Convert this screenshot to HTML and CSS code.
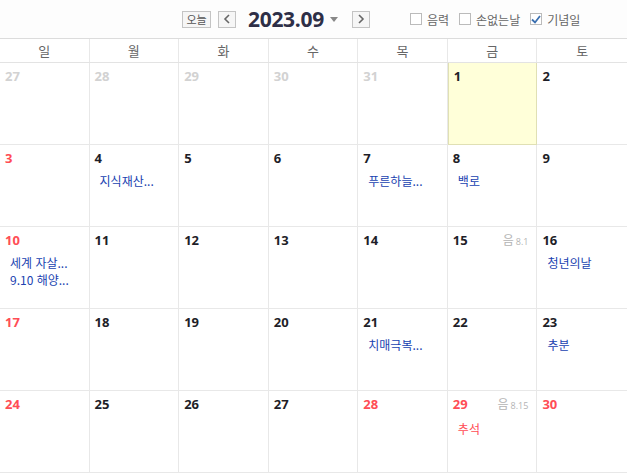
FILE: index.html
```html
<!DOCTYPE html>
<html lang="ko">
<head>
<meta charset="utf-8">
<link rel="stylesheet" href="styles.css">
</head>
<body>
<div class="top">
  <div class="nav">
    <button class="btn today-btn">오늘</button>
    <button class="btn arrow"><svg width="8" height="10" viewBox="0 0 8 10"><path d="M6 1 L2 5 L6 9" fill="none" stroke="#666" stroke-width="1.6"/></svg></button>
    <div class="title">2023.09</div>
    <svg class="caret" width="8" height="5" viewBox="0 0 8 5"><path d="M0 0 L8 0 L4 5 Z" fill="#888"/></svg>
    <button class="btn arrow"><svg width="8" height="10" viewBox="0 0 8 10"><path d="M2 1 L6 5 L2 9" fill="none" stroke="#666" stroke-width="1.6"/></svg></button>
  </div>
  <div class="opts">
    <label class="opt"><span class="box"></span>음력</label>
    <label class="opt"><span class="box"></span>손없는날</label>
    <label class="opt"><span class="box checked"><svg width="10" height="9" viewBox="0 0 10 9"><path d="M1 4.5 L4 7.5 L9 1" fill="none" stroke="#3a6fb0" stroke-width="1.8"/></svg></span>기념일</label>
  </div>
</div>
<div class="weekdays">
  <div class="wd">일</div><div class="wd">월</div><div class="wd">화</div><div class="wd">수</div><div class="wd">목</div><div class="wd">금</div><div class="wd">토</div>
</div>
<div class="grid">
  <div class="cell"><div class="num dim">27</div></div>
  <div class="cell"><div class="num dim">28</div></div>
  <div class="cell"><div class="num dim">29</div></div>
  <div class="cell"><div class="num dim">30</div></div>
  <div class="cell"><div class="num dim">31</div></div>
  <div class="cell today"><div class="num">1</div></div>
  <div class="cell"><div class="num">2</div></div>

  <div class="cell"><div class="num red">3</div></div>
  <div class="cell"><div class="num">4</div><div class="ev">지식재산...</div></div>
  <div class="cell"><div class="num">5</div></div>
  <div class="cell"><div class="num">6</div></div>
  <div class="cell"><div class="num">7</div><div class="ev">푸른하늘...</div></div>
  <div class="cell"><div class="num">8</div><div class="ev">백로</div></div>
  <div class="cell"><div class="num">9</div></div>

  <div class="cell"><div class="num red">10</div><div class="ev">세계 자살...</div><div class="ev">9.10 해양...</div></div>
  <div class="cell"><div class="num">11</div></div>
  <div class="cell"><div class="num">12</div></div>
  <div class="cell"><div class="num">13</div></div>
  <div class="cell"><div class="num">14</div></div>
  <div class="cell"><div class="num">15<span class="lunar">음<small>8.1</small></span></div></div>
  <div class="cell"><div class="num">16</div><div class="ev">청년의날</div></div>

  <div class="cell"><div class="num red">17</div></div>
  <div class="cell"><div class="num">18</div></div>
  <div class="cell"><div class="num">19</div></div>
  <div class="cell"><div class="num">20</div></div>
  <div class="cell"><div class="num">21</div><div class="ev">치매극복...</div></div>
  <div class="cell"><div class="num">22</div></div>
  <div class="cell"><div class="num">23</div><div class="ev">추분</div></div>

  <div class="cell"><div class="num red">24</div></div>
  <div class="cell"><div class="num">25</div></div>
  <div class="cell"><div class="num">26</div></div>
  <div class="cell"><div class="num">27</div></div>
  <div class="cell"><div class="num red">28</div></div>
  <div class="cell"><div class="num red">29<span class="lunar">음<small>8.15</small></span></div><div class="ev holiday">추석</div></div>
  <div class="cell"><div class="num red">30</div></div>
</div>
</body>
</html>
```
FILE: styles.css
```css
* { box-sizing: border-box; }
body {
  margin: 0;
  width: 627px;
  height: 473px;
  overflow: hidden;
  background: #fff;
  font-family: "Noto Sans CJK KR", "Noto Sans", sans-serif;
  color: #222;
}
.top {
  height: 39px;
  border-bottom: 1px solid #dcdcdc;
  background: #fdfdfd;
  position: relative;
  display: flex;
  align-items: center;
}
.nav {
  display: flex;
  align-items: center;
  margin-left: 182px;
}
.btn {
  height: 17px;
  border: 1px solid #c4c4c4;
  background: #f6f6f6;
  padding: 0;
  font-family: inherit;
  font-size: 11px;
  color: #555;
  display: flex;
  align-items: center;
  justify-content: center;
  line-height: 1;
}
.today-btn { width: 29px; margin-right: 7px; }
.arrow { width: 18px; }
.title {
  margin-left: 12px;
  font-family: "Open Sans", "Noto Sans", sans-serif;
  font-weight: 700;
  font-size: 21px;
  color: #2e2f47;
  letter-spacing: -0.3px;
  line-height: 24px;
}
.caret { margin-left: 6px; margin-right: 14px; }
.opts {
  display: flex;
  align-items: center;
  margin-left: 40px;
}
.opt {
  display: flex;
  align-items: center;
  font-size: 12px;
  color: #666;
  margin-right: 10px;
}
.box {
  width: 12px;
  height: 12px;
  border: 1px solid #bbb;
  background: #fff;
  margin-right: 5px;
  display: flex;
  align-items: center;
  justify-content: center;
}
.weekdays {
  display: grid;
  grid-template-columns: repeat(7, 1fr);
  height: 24px;
  border-bottom: 1px solid #e3e3e3;
}
.wd {
  display: flex;
  align-items: center;
  justify-content: center;
  font-size: 13px;
  color: #666;
  border-right: 1px solid #e8e8e8;
}
.wd:last-child { border-right: none; }
.grid {
  display: grid;
  grid-template-columns: repeat(7, 1fr);
  grid-template-rows: repeat(5, 82px);
}
.cell {
  border-right: 1px solid #e8e8e8;
  border-bottom: 1px solid #e8e8e8;
  padding: 4px 8px 0 5px;
  position: relative;
}
.cell:nth-child(7n) { border-right: none; }
.cell.today {
  background: #ffffd9;
  border: 1px solid #e0e0b4;
  border-top: none;
}
.num {
  font-family: "Open Sans", "Noto Sans", sans-serif;
  font-weight: 700;
  font-size: 13px;
  line-height: 18px;
  color: #1e1e28;
  display: flex;
  justify-content: space-between;
  align-items: baseline;
}
.num.dim { color: #d2d2d2; }
.num.red { color: #ff4d55; }
.lunar {
  font-family: "Noto Sans CJK KR", sans-serif;
  font-weight: 400;
  font-size: 12px;
  color: #b4b4b4;
}
.lunar small {
  font-family: "Open Sans", sans-serif;
  font-size: 9px;
  margin-left: 2px;
}
.ev {
  font-size: 12px;
  line-height: 17px;
  color: #2042b0;
  padding-left: 5px;
  white-space: nowrap;
}
.num + .ev { margin-top: 5px; }
.ev.holiday { color: #ff4d55; }
```
